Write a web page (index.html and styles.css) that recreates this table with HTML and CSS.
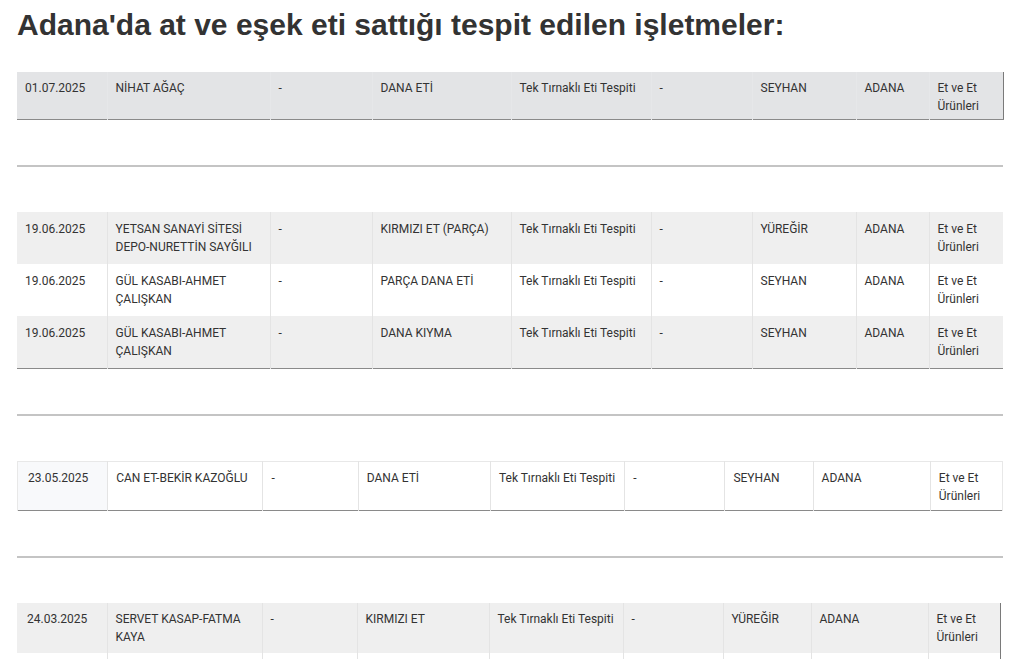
FILE: index.html
```html
<!DOCTYPE html>
<html lang="tr">
<head>
<meta charset="utf-8">
<title>Adana'da at ve eşek eti</title>
<link rel="stylesheet" href="styles.css">
</head>
<body>
<main class="page">
  <h1 class="title">Adana'da at ve eşek eti sattığı tespit edilen işletmeler:</h1>

  <table class="grid grid-a tone-dark edge-right">
    <colgroup>
      <col class="a1"><col class="a2"><col class="a3"><col class="a4"><col class="a5"><col class="a6"><col class="a7"><col class="a8"><col class="a9">
    </colgroup>
    <tbody>
      <tr class="shade">
        <td>01.07.2025</td><td>NİHAT AĞAÇ</td><td>-</td><td>DANA ETİ</td><td>Tek Tırnaklı Eti Tespiti</td><td>-</td><td>SEYHAN</td><td>ADANA</td><td>Et ve Et Ürünleri</td>
      </tr>
    </tbody>
  </table>

  <hr class="sep">

  <table class="grid grid-a multi">
    <colgroup>
      <col class="a1"><col class="a2"><col class="a3"><col class="a4"><col class="a5"><col class="a6"><col class="a7"><col class="a8"><col class="a9">
    </colgroup>
    <tbody>
      <tr class="shade">
        <td>19.06.2025</td><td>YETSAN SANAYİ SİTESİ DEPO-NURETTİN SAYĞILI</td><td>-</td><td>KIRMIZI ET (PARÇA)</td><td>Tek Tırnaklı Eti Tespiti</td><td>-</td><td>YÜREĞİR</td><td>ADANA</td><td>Et ve Et Ürünleri</td>
      </tr>
      <tr>
        <td>19.06.2025</td><td>GÜL KASABI-AHMET ÇALIŞKAN</td><td>-</td><td>PARÇA DANA ETİ</td><td>Tek Tırnaklı Eti Tespiti</td><td>-</td><td>SEYHAN</td><td>ADANA</td><td>Et ve Et Ürünleri</td>
      </tr>
      <tr class="shade">
        <td>19.06.2025</td><td>GÜL KASABI-AHMET ÇALIŞKAN</td><td>-</td><td>DANA KIYMA</td><td>Tek Tırnaklı Eti Tespiti</td><td>-</td><td>SEYHAN</td><td>ADANA</td><td>Et ve Et Ürünleri</td>
      </tr>
    </tbody>
  </table>

  <hr class="sep">

  <table class="grid grid-b boxed">
    <colgroup>
      <col class="b1"><col class="b2"><col class="b3"><col class="b4"><col class="b5"><col class="b6"><col class="b7"><col class="b8"><col class="b9">
    </colgroup>
    <tbody>
      <tr>
        <td class="tint">23.05.2025</td><td>CAN ET-BEKİR KAZOĞLU</td><td>-</td><td>DANA ETİ</td><td>Tek Tırnaklı Eti Tespiti</td><td>-</td><td>SEYHAN</td><td>ADANA</td><td>Et ve Et Ürünleri</td>
      </tr>
    </tbody>
  </table>

  <hr class="sep">

  <table class="grid grid-b edge-right open">
    <colgroup>
      <col class="b1"><col class="b2"><col class="b3"><col class="b4"><col class="b5"><col class="b6"><col class="b7"><col class="b8"><col class="b9">
    </colgroup>
    <tbody>
      <tr class="shade">
        <td>24.03.2025</td><td>SERVET KASAP-FATMA KAYA</td><td>-</td><td>KIRMIZI ET</td><td>Tek Tırnaklı Eti Tespiti</td><td>-</td><td>YÜREĞİR</td><td>ADANA</td><td>Et ve Et Ürünleri</td>
      </tr>
      <tr class="stub">
        <td></td><td></td><td></td><td></td><td></td><td></td><td></td><td></td><td></td>
      </tr>
    </tbody>
  </table>
</main>
</body>
</html>
```

FILE: styles.css
```css
* { box-sizing: border-box; }

html, body {
  margin: 0;
  padding: 0;
  background: #ffffff;
}

.page {
  padding: 0 23px 0 17px;
  width: 1026px;
}

.title {
  margin: 0;
  padding-top: 8px;
  height: 72px;
  font-family: "Liberation Sans", Arial, sans-serif;
  font-weight: 700;
  font-size: 30px;
  line-height: 34px;
  color: #333333;
}

.grid {
  width: 986px;
  border-collapse: collapse;
  table-layout: fixed;
  font-family: Roboto, "Noto Sans", sans-serif;
  font-size: 12px;
  line-height: 18px;
  color: #333333;
  border-bottom: 1px solid #8a8a8a;
}

.grid td {
  vertical-align: top;
  padding: 8px 8px 7px 8px;
  border-left: 1px solid #e4e4e4;
  border-right: 1px solid #e4e4e4;
}

.grid td:first-child { border-left: 0; }
.grid td:last-child { border-right: 0; }

.grid .shade td { background: #efefef; }

.multi td { padding-bottom: 8px; }

.tone-dark .shade td {
  background: #e3e4e6;
  border-color: #e6e7e9;
  padding-top: 7px;
  padding-bottom: 4px;
}

.edge-right { border-right: 1px solid #7a7a7a; }

.boxed td {
  border-top: 1px solid #e8e8e8;
  padding-top: 7px;
  padding-bottom: 5px;
}
.boxed td:first-child { border-left: 1px solid #e8e8e8; padding-left: 10px; }
.boxed td:last-child { border-right: 1px solid #e8e8e8; }
.boxed .tint { background: #f8f9fb; }

.open { border-bottom: 0; width: 983px; }
.open .shade td { padding-top: 7px; padding-bottom: 7px; }
.open td:first-child { padding-left: 10px; }
.open .stub td { padding: 0; height: 6px; }

.a1 { width: 90px; }
.a2 { width: 163px; }
.a3 { width: 102px; }
.a4 { width: 139px; }
.a5 { width: 140px; }
.a6 { width: 101px; }
.a7 { width: 104px; }
.a8 { width: 73px; }
.a9 { width: 74px; }

.b1 { width: 90px; }
.b2 { width: 155px; }
.b3 { width: 95px; }
.b4 { width: 132px; }
.b5 { width: 134px; }
.b6 { width: 100px; }
.b7 { width: 88px; }
.b8 { width: 117px; }
.b9 { width: 72px; }

.sep {
  margin: 45px 0 45px 0;
  width: 986px;
  height: 2px;
  border: 0;
  background: #c4c4c4;
}
```
